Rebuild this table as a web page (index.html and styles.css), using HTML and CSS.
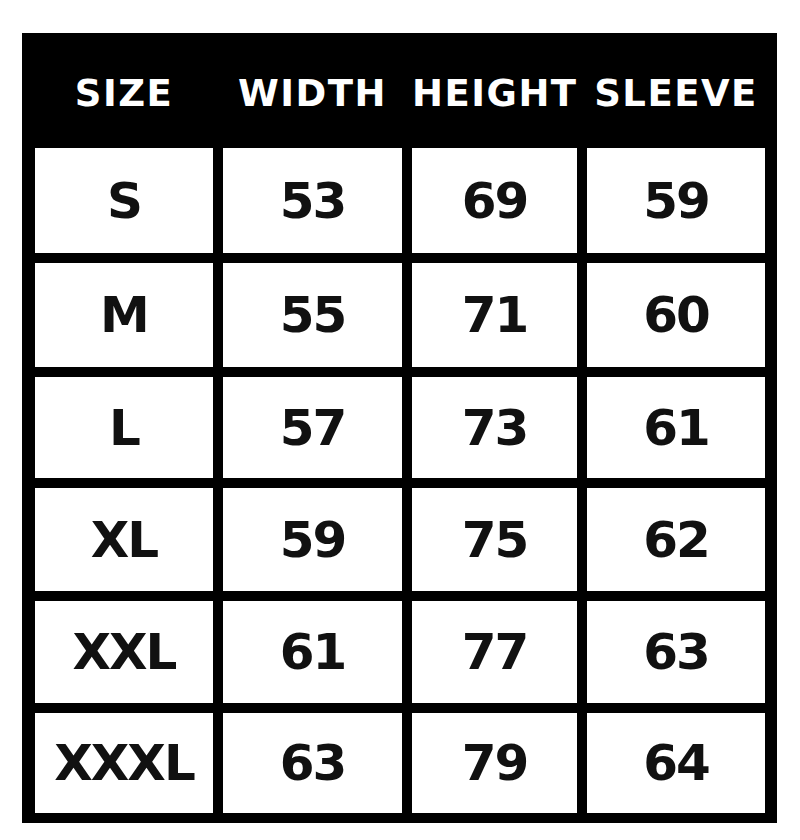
FILE: index.html
```html
<!DOCTYPE html>
<html>
<head>
<meta charset="utf-8">
<link rel="stylesheet" href="styles.css">
</head>
<body>
<div class="chart">
  <div class="head">
    <div class="hcell">SIZE</div>
    <div class="hcell">WIDTH</div>
    <div class="hcell">HEIGHT</div>
    <div class="hcell">SLEEVE</div>
  </div>
  <div class="grid">
    <div class="cell">S</div><div class="cell">53</div><div class="cell">69</div><div class="cell">59</div>
    <div class="cell">M</div><div class="cell">55</div><div class="cell">71</div><div class="cell">60</div>
    <div class="cell">L</div><div class="cell">57</div><div class="cell">73</div><div class="cell">61</div>
    <div class="cell">XL</div><div class="cell">59</div><div class="cell">75</div><div class="cell">62</div>
    <div class="cell">XXL</div><div class="cell">61</div><div class="cell">77</div><div class="cell">63</div>
    <div class="cell">XXXL</div><div class="cell">63</div><div class="cell">79</div><div class="cell">64</div>
  </div>
</div>
</body>
</html>
```
FILE: styles.css
```css
html, body {
  margin: 0;
  padding: 0;
  background: #fff;
}
body {
  font-family: "DejaVu Sans", "Liberation Sans", sans-serif;
  font-weight: bold;
}
.chart {
  margin: 33px 0 0 22px;
  width: 755px;
  box-sizing: border-box;
  background: #000;
  padding: 0 12px 10px 13px;
}
.head,
.grid {
  display: grid;
  grid-template-columns: 178px 179px 165px 178px;
  column-gap: 10px;
}
.head {
  height: 115px;
  align-items: center;
}
.hcell {
  color: #fff;
  text-align: center;
  font-size: 37px;
  letter-spacing: 1.5px;
  padding-top: 6px;
  white-space: nowrap;
}
.grid {
  grid-template-rows: 105px 104px 101px 103px 102px 100px;
  row-gap: 10px;
}
.cell {
  background: #fff;
  color: #111;
  display: flex;
  align-items: center;
  justify-content: center;
  font-size: 50px;
  letter-spacing: -2px;
  white-space: nowrap;
}
```
